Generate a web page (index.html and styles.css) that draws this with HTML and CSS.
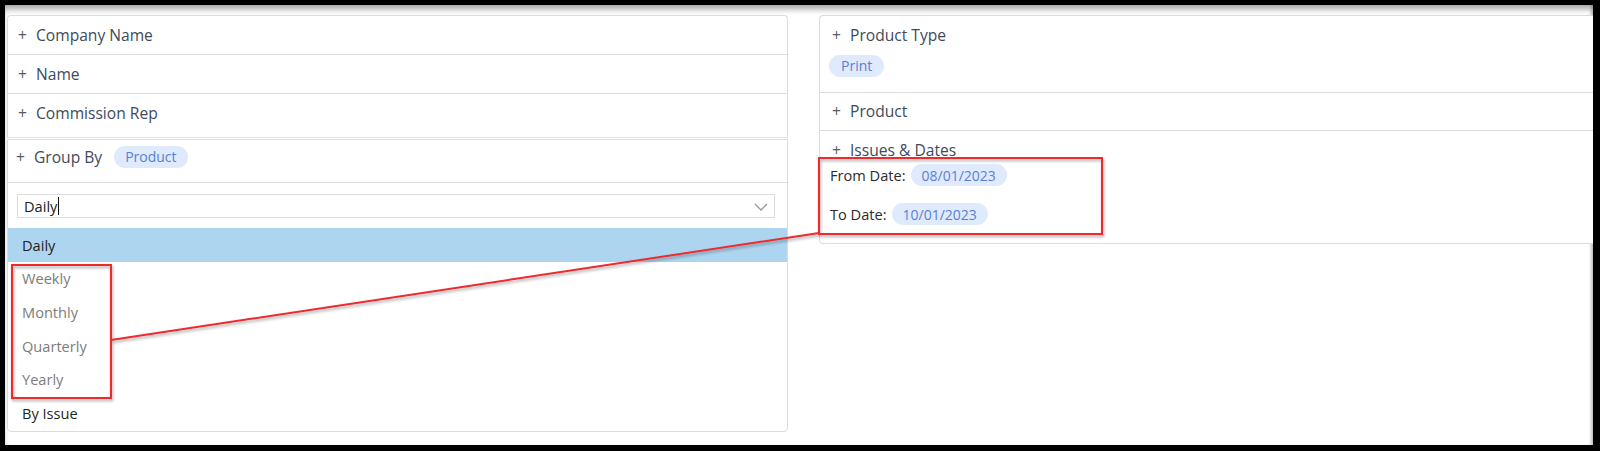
FILE: index.html
```html
<!DOCTYPE html>
<html>
<head>
<meta charset="utf-8">
<link rel="stylesheet" href="styles.css">
</head>
<body>
<div class="frame">
  <div class="layout">
    <div class="col-left">
      <div class="panel panel-top">
        <div class="row"><span class="plus">+</span><span class="label">Company Name</span></div>
        <div class="row"><span class="plus">+</span><span class="label">Name</span></div>
        <div class="row row-last"><span class="plus">+</span><span class="label">Commission Rep</span></div>
      </div>
      <div class="panel panel-group">
        <div class="group-head"><span class="plus">+</span><span class="label">Group By</span><span class="chip">Product</span></div>
        <div class="select-wrap">
          <div class="select-input"><span class="select-text">Daily</span><span class="caret"></span>
            <svg class="chev" width="14" height="8" viewBox="0 0 14 8"><path d="M1 1 L7 7 L13 1" fill="none" stroke="#9a9a9a" stroke-width="1.3"/></svg>
          </div>
        </div>
        <ul class="options">
          <li class="opt selected">Daily</li>
          <li class="opt muted">Weekly</li>
          <li class="opt muted">Monthly</li>
          <li class="opt muted">Quarterly</li>
          <li class="opt muted">Yearly</li>
          <li class="opt">By Issue</li>
        </ul>
      </div>
    </div>
    <div class="col-right">
      <div class="panel panel-right">
        <div class="rsec rsec-type">
          <div class="rtitle"><span class="plus">+</span><span class="label">Product Type</span></div>
          <span class="chip chip-print">Print</span>
        </div>
        <div class="rsec rsec-product">
          <div class="rtitle"><span class="plus">+</span><span class="label">Product</span></div>
        </div>
        <div class="rsec rsec-dates">
          <div class="rtitle"><span class="plus">+</span><span class="label">Issues &amp; Dates</span></div>
          <div class="date-line date-from"><span class="date-label">From Date:</span><span class="chip">08/01/2023</span></div>
          <div class="date-line date-to"><span class="date-label">To Date:</span><span class="chip">10/01/2023</span></div>
        </div>
      </div>
    </div>
  </div>
  <svg class="annot" width="1600" height="451" viewBox="0 0 1600 451">
    <defs>
      <filter id="sh" x="-10%" y="-10%" width="120%" height="130%">
        <feDropShadow dx="1" dy="2" stdDeviation="1.5" flood-color="#000" flood-opacity="0.35"/>
      </filter>
    </defs>
    <g filter="url(#sh)" fill="none" stroke="#ee2b2f" stroke-width="2">
      <rect x="12" y="265" width="99" height="133"/>
      <rect x="819" y="158" width="283" height="76"/>
      <line x1="111" y1="340" x2="819" y2="233"/>
    </g>
  </svg>
</div>
</body>
</html>
```

FILE: styles.css
```css
* { box-sizing: border-box; }
html, body { margin: 0; padding: 0; }
body {
  width: 1600px;
  height: 451px;
  background: #000;
  font-family: "Open Sans", "Noto Sans", sans-serif;
  overflow: hidden;
}
.frame {
  position: relative;
  width: 1600px;
  height: 451px;
  border-style: solid;
  border-color: #000;
  border-width: 5px 7px 6px 5px;
  background: #fff;
  overflow: hidden;
  box-shadow: inset 0 6px 6px -2px rgba(0,0,0,0.35), inset -3px 0 3px -1px rgba(0,0,0,0.2);
}
.layout {
  display: grid;
  grid-template-columns: 781px 1fr;
  column-gap: 31px;
  padding: 10px 0 0 2px;
  width: 1600px;
}
.panel {
  background: #fff;
  border: 1px solid #dcdcdc;
}
.panel-top {
  border-radius: 4px 4px 0 0;
  border-bottom: none;
}
.row {
  height: 39px;
  display: flex;
  align-items: center;
  padding-left: 10px;
  border-bottom: 1px solid #dcdcdc;
}
.row-last { height: 44px; padding-bottom: 6px; border-bottom: 1px solid #e4e4e4; }
.plus {
  color: #555c66;
  font-size: 15.6px;
  width: 18px;
  display: inline-block;
}
.label {
  color: #3e4a5a;
  font-size: 15.6px;
}
.panel-group {
  border-radius: 0 0 4px 4px;
  margin-top: 1px;
  height: 293px;
}
.group-head {
  height: 43px;
  display: flex;
  align-items: center;
  padding-left: 8px;
  padding-bottom: 9px;
  border-bottom: 1px solid #dcdcdc;
}
.chip {
  display: inline-flex;
  align-items: center;
  height: 22px;
  padding: 0 11px;
  border-radius: 11px;
  background: #dfeafc;
  color: #5a7fd4;
  font-size: 14px;
}
.group-head .chip { margin-left: 12px; }
.select-wrap {
  padding: 11px 12px 0 9px;
}
.select-input {
  position: relative;
  height: 24px;
  border: 1px solid #dedede;
  display: flex;
  align-items: center;
  padding-left: 6px;
  font-size: 14.6px;
  color: #222;
}
.caret {
  display: inline-block;
  width: 1px;
  height: 18px;
  background: #111;
  margin-left: 1px;
}
.chev {
  position: absolute;
  right: 6px;
  top: 8px;
}
.options {
  list-style: none;
  margin: 10px 0 0 0;
  padding: 0;
}
.opt {
  height: 33.6px;
  display: flex;
  align-items: center;
  padding-left: 14px;
  font-size: 14.6px;
  color: #1f1f1f;
}
.opt.selected { background: #aed5ef; color: #222; }
.opt.muted { color: #7c7c7c; }
.panel-right {
  border-radius: 4px 0 0 4px;
  border-right: none;
  width: 800px;
  height: 229px;
}
.rsec { border-bottom: 1px solid #dcdcdc; padding-left: 12px; }
.rsec-dates { border-bottom: none; }
.rtitle { display: flex; align-items: center; height: 38px; }
.rsec-type { height: 77px; }
.rsec-type .chip { margin-left: -3px; margin-top: -6px; padding: 0 12px; }
.rsec-product { height: 38px; }
.rsec-product .rtitle { height: 36px; }
.rsec-dates .rtitle { height: 37px; }
.date-line {
  display: flex;
  align-items: center;
  margin-left: -2px;
  font-size: 14.6px;
  color: #2b2b2b;
}
.date-line .date-label { margin-right: 5px; }
.date-from { height: 22px; margin-top: -4px; }
.date-to { height: 22px; margin-top: 17px; }
.annot {
  position: absolute;
  left: -5px;
  top: -5px;
  pointer-events: none;
}
```
